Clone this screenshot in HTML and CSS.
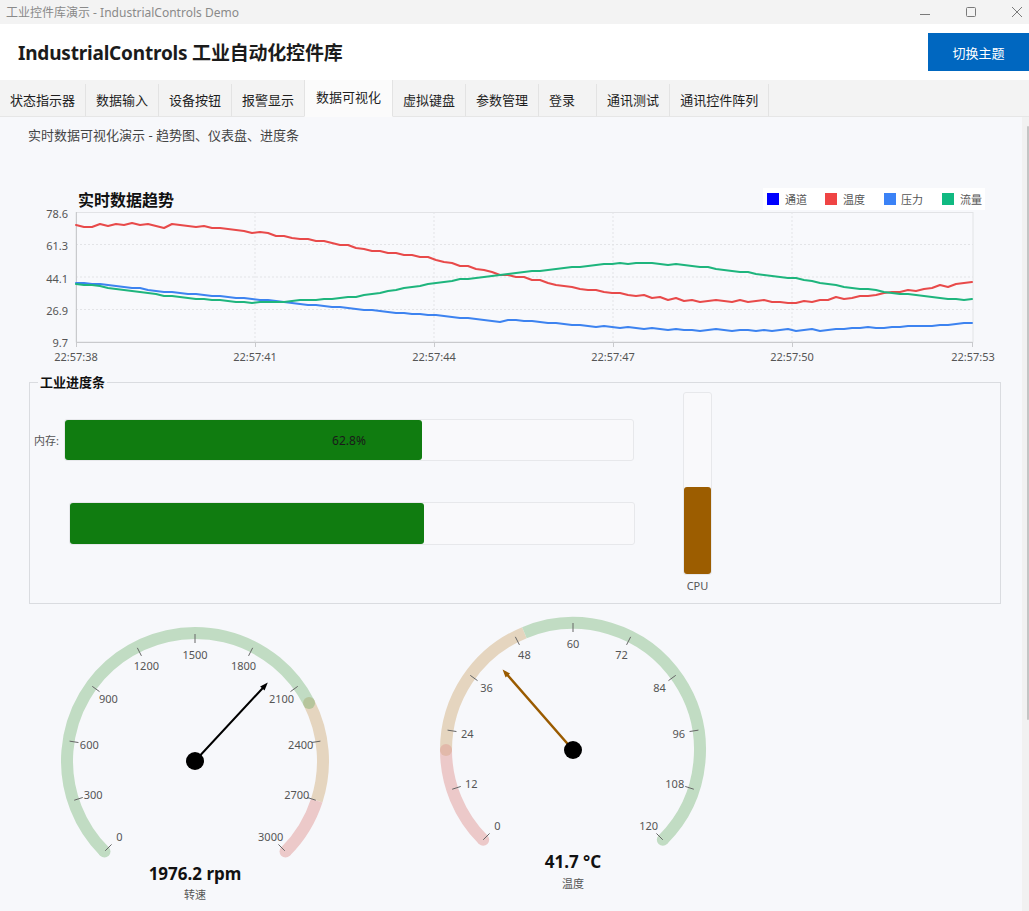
FILE: index.html
```html
<!DOCTYPE html>
<html lang="zh-CN">
<head>
<meta charset="utf-8">
<title>工业控件库演示 - IndustrialControls Demo</title>
<link rel="stylesheet" href="styles.css">
</head>
<body>
<div class="titlebar">
  <span class="caption">工业控件库演示 - IndustrialControls Demo</span>
  <div class="winctl">
    <svg viewBox="0 0 12 12"><line x1="1" y1="8.5" x2="11" y2="8.5"/></svg>
    <svg viewBox="0 0 12 12"><rect x="1.5" y="1.5" width="9" height="9" rx="1"/></svg>
    <svg viewBox="0 0 12 12"><line x1="1" y1="1" x2="11" y2="11"/><line x1="11" y1="1" x2="1" y2="11"/></svg>
  </div>
</div>
<div class="header">
  <h1>IndustrialControls 工业自动化控件库</h1>
  <div class="theme-btn">切换主题</div>
</div>
<div class="tabs">
  <div class="tab">状态指示器</div>
  <div class="tab">数据输入</div>
  <div class="tab">设备按钮</div>
  <div class="tab">报警显示</div>
  <div class="tab active">数据可视化</div>
  <div class="tab">虚拟键盘</div>
  <div class="tab">参数管理</div>
  <div class="tab">登录</div>
  <div class="tab">通讯测试</div>
  <div class="tab">通讯控件阵列</div>
</div>
<div class="main">
  <div class="content">
    <p class="subtitle">实时数据可视化演示 - 趋势图、仪表盘、进度条</p>

    <svg class="chart" width="1000" height="190" viewBox="20 180 1000 190">
      <text class="chart-title" x="78" y="200">实时数据趋势</text>
      <rect class="legend-bg" x="763" y="188" width="222" height="22"/>
      <rect x="767" y="193" width="12" height="12" fill="#0000ff"/>
      <text class="legend-text" x="785" y="199">通道</text>
      <rect x="825" y="193" width="12" height="12" fill="#ef4444"/>
      <text class="legend-text" x="843" y="199">温度</text>
      <rect x="884" y="193" width="12" height="12" fill="#3b82f6"/>
      <text class="legend-text" x="901" y="199">压力</text>
      <rect x="942" y="193" width="12" height="12" fill="#10b981"/>
      <text class="legend-text" x="960" y="199">流量</text>

      <rect class="plot-bg" x="76" y="212.5" width="897" height="129.5"/>
      <g class="grid">
        <line x1="76" y1="244.5" x2="973" y2="244.5"/>
        <line x1="76" y1="277" x2="973" y2="277"/>
        <line x1="76" y1="309.5" x2="973" y2="309.5"/>
        <line x1="255" y1="212" x2="255" y2="342"/>
        <line x1="434" y1="212" x2="434" y2="342"/>
        <line x1="613" y1="212" x2="613" y2="342"/>
        <line x1="792" y1="212" x2="792" y2="342"/>
      </g>
      <g class="axis">
        <line x1="76.5" y1="212" x2="76.5" y2="342"/>
        <line x1="76" y1="342.5" x2="973" y2="342.5"/>
        <line x1="76.5" y1="342" x2="76.5" y2="347"/>
        <line x1="255.5" y1="342" x2="255.5" y2="347"/>
        <line x1="434.5" y1="342" x2="434.5" y2="347"/>
        <line x1="613.5" y1="342" x2="613.5" y2="347"/>
        <line x1="792.5" y1="342" x2="792.5" y2="347"/>
        <line x1="972.5" y1="342" x2="972.5" y2="347"/>
      </g>
      <g class="ylab">
        <text x="68" y="213">78.6</text>
        <text x="68" y="245">61.3</text>
        <text x="68" y="278">44.1</text>
        <text x="68" y="310">26.9</text>
        <text x="68" y="342">9.7</text>
      </g>
      <g class="xlab">
        <text x="76" y="356">22:57:38</text>
        <text x="255" y="356">22:57:41</text>
        <text x="434" y="356">22:57:44</text>
        <text x="613" y="356">22:57:47</text>
        <text x="792" y="356">22:57:50</text>
        <text x="973" y="356">22:57:53</text>
      </g>
      <polyline class="series s-red" points="76,225 84,227 92,227 100,224 108,226 116,224 124,225 132,223 140,225 148,224 156,226 164,228 172,224 180,225 188,226 196,227 204,226 212,228 220,228 228,229 236,230 244,231 252,233 260,232 268,233 276,236 284,236 292,238 300,239 308,239 316,241 324,241 332,243 340,245 348,245 356,248 364,249 372,251 380,251 388,253 396,253 404,255 412,255 420,257 428,257 436,260 444,262 452,263 460,266 468,266 476,269 484,270 492,272 500,275 508,275 516,277 524,277 532,280 540,280 548,283 556,285 564,286 572,287 580,289 588,290 596,290 604,292 612,293 620,293 628,295 636,296 644,295 652,298 660,297 668,300 676,298 684,301 692,300 700,302 708,301 716,300 724,301 732,302 740,300 748,302 756,301 764,300 772,302 780,302 788,303 796,303 804,301 812,302 820,300 828,300 836,297 844,299 852,298 860,296 868,296 876,295 884,293 892,292 900,292 908,290 916,291 924,289 932,288 940,285 948,287 956,284 964,283 972,282"/>
      <polyline class="series s-blue" points="76,283 84,283 92,284 100,284 108,285 116,286 124,287 132,288 140,288 148,290 156,291 164,292 172,292 180,293 188,294 196,294 204,295 212,296 220,296 228,297 236,298 244,298 252,299 260,300 268,300 276,301 284,302 292,303 300,304 308,305 316,305 324,306 332,307 340,307 348,308 356,309 364,310 372,310 380,311 388,312 396,313 404,313 412,314 420,314 428,315 436,315 444,316 452,317 460,318 468,318 476,319 484,320 492,321 500,322 508,320 516,320 524,321 532,321 540,322 548,323 556,323 564,324 572,325 580,325 588,326 596,327 604,326 612,327 620,328 628,327 636,328 644,329 652,328 660,329 668,330 676,329 684,330 692,330 700,331 708,330 716,329 724,330 732,331 740,330 748,330 756,331 764,330 772,331 780,330 788,329 796,331 804,330 812,329 820,331 828,330 836,329 844,329 852,328 860,328 868,327 876,328 884,328 892,327 900,327 908,326 916,326 924,326 932,326 940,325 948,325 956,324 964,323 972,323"/>
      <polyline class="series s-green" points="76,284 84,285 92,285 100,286 108,288 116,289 124,290 132,291 140,292 148,293 156,294 164,296 172,296 180,297 188,298 196,299 204,299 212,300 220,300 228,301 236,302 244,302 252,303 260,302 268,302 276,302 284,302 292,301 300,300 308,300 316,300 324,299 332,299 340,298 348,297 356,297 364,295 372,294 380,293 388,291 396,290 404,288 412,287 420,286 428,284 436,283 444,282 452,281 460,279 468,279 476,278 484,277 492,276 500,275 508,274 516,273 524,272 532,271 540,271 548,270 556,269 564,268 572,267 580,267 588,266 596,265 604,264 612,264 620,263 628,264 636,263 644,263 652,263 660,264 668,265 676,264 684,265 692,266 700,267 708,267 716,269 724,270 732,271 740,272 748,272 756,274 764,275 772,276 780,277 788,278 796,278 804,280 812,281 820,283 828,284 836,285 844,287 852,288 860,289 868,289 876,290 884,292 892,293 900,294 908,294 916,295 924,296 932,297 940,298 948,299 956,299 964,300 972,299"/>
    </svg>

    <div class="group">
      <span class="group-title">工业进度条</span>
      <div class="group-body">
        <div class="hbars">
          <div class="hrow">
            <span class="hlabel">内存:</span>
            <div class="track track-1">
              <div class="fill" style="width:62.8%"></div>
              <span class="pct">62.8%</span>
            </div>
          </div>
          <div class="track track-2">
            <div class="fill" style="width:62.8%"></div>
          </div>
        </div>
        <div class="vbar">
          <div class="vtrack">
            <div class="vfill" style="height:48%"></div>
          </div>
          <span class="vlabel">CPU</span>
        </div>
      </div>
    </div>

    <div class="gauges">
      <svg class="gauge gauge-left" width="300" height="296" viewBox="0 0 300 296">
        <path class="arc arc-green" d="M59.49 236.51 A128 128 0 1 1 264.05 87.89"/>
        <path class="arc arc-amber" d="M264.05 87.89 A128 128 0 0 1 271.74 185.55"/>
        <path class="arc arc-red" d="M271.74 185.55 A128 128 0 0 1 240.51 236.51"/>
        <circle cx="59.49" cy="236.51" r="6" fill="#c1dcc3"/>
        <circle cx="240.51" cy="236.51" r="6" fill="#ecc9c9"/>
        <circle cx="264.05" cy="87.89" r="6" fill="#b6c59c"/>
        <g class="ticks">
          <line x1="66.56" y1="229.44" x2="60.20" y2="235.80"/>
          <line x1="37.77" y1="182.46" x2="29.21" y2="185.24"/>
          <line x1="33.45" y1="127.54" x2="24.56" y2="126.14"/>
          <line x1="54.54" y1="76.64" x2="47.26" y2="71.35"/>
          <line x1="96.43" y1="40.86" x2="92.34" y2="32.84"/>
          <line x1="150" y1="28" x2="150" y2="19"/>
          <line x1="203.57" y1="40.86" x2="207.66" y2="32.84"/>
          <line x1="245.46" y1="76.64" x2="252.74" y2="71.35"/>
          <line x1="266.55" y1="127.54" x2="275.44" y2="126.14"/>
          <line x1="262.23" y1="182.46" x2="270.79" y2="185.24"/>
          <line x1="233.44" y1="229.44" x2="239.80" y2="235.80"/>
        </g>
        <g class="tick-labels">
          <text x="74.34" y="221.66">0</text>
          <text x="48.23" y="179.06">300</text>
          <text x="44.32" y="129.27">600</text>
          <text x="63.44" y="83.11">900</text>
          <text x="101.42" y="50.66">1200</text>
          <text x="150" y="39">1500</text>
          <text x="198.58" y="50.66">1800</text>
          <text x="236.56" y="83.11">2100</text>
          <text x="255.68" y="129.27">2400</text>
          <text x="251.77" y="179.06">2700</text>
          <text x="225.66" y="221.66">3000</text>
        </g>
        <line class="needle needle-black" x1="150" y1="146" x2="219" y2="71.7"/>
        <polygon fill="#000" points="222.79,67.58 219.55,75.48 215.15,71.40"/>
        <circle cx="150" cy="146" r="9" fill="#000"/>
        <text class="g-value" x="150" y="258">1976.2 rpm</text>
        <text class="g-name" x="150" y="279">转速</text>
      </svg>

      <svg class="gauge gauge-right" width="300" height="300" viewBox="0 0 300 300">
        <path class="arc arc-red" d="M60.20 235.80 A127 127 0 0 1 23 146"/>
        <path class="arc arc-amber" d="M23 146 A127 127 0 0 1 101.40 28.67"/>
        <path class="arc arc-green" d="M101.40 28.67 A127 127 0 0 1 239.80 235.80"/>
        <circle cx="60.20" cy="235.80" r="6" fill="#ecc9c9"/>
        <circle cx="239.80" cy="235.80" r="6" fill="#c1dcc3"/>
        <circle cx="23" cy="146" r="6" fill="#e2b9aa"/>
        <g class="ticks">
          <line x1="66.56" y1="229.44" x2="60.20" y2="235.80"/>
          <line x1="37.77" y1="182.46" x2="29.21" y2="185.24"/>
          <line x1="33.45" y1="127.54" x2="24.56" y2="126.14"/>
          <line x1="54.54" y1="76.64" x2="47.26" y2="71.35"/>
          <line x1="96.43" y1="40.86" x2="92.34" y2="32.84"/>
          <line x1="150" y1="28" x2="150" y2="19"/>
          <line x1="203.57" y1="40.86" x2="207.66" y2="32.84"/>
          <line x1="245.46" y1="76.64" x2="252.74" y2="71.35"/>
          <line x1="266.55" y1="127.54" x2="275.44" y2="126.14"/>
          <line x1="262.23" y1="182.46" x2="270.79" y2="185.24"/>
          <line x1="233.44" y1="229.44" x2="239.80" y2="235.80"/>
        </g>
        <g class="tick-labels">
          <text x="74.34" y="221.66">0</text>
          <text x="48.23" y="179.06">12</text>
          <text x="44.32" y="129.27">24</text>
          <text x="63.44" y="83.11">36</text>
          <text x="101.42" y="50.66">48</text>
          <text x="150" y="39">60</text>
          <text x="198.58" y="50.66">72</text>
          <text x="236.56" y="83.11">84</text>
          <text x="255.68" y="129.27">96</text>
          <text x="251.77" y="179.06">108</text>
          <text x="225.66" y="221.66">120</text>
        </g>
        <line class="needle needle-brown" x1="150" y1="146" x2="82.5" y2="68.8"/>
        <polygon fill="#9a5b00" points="79.56,65.46 87.09,69.51 82.57,73.45"/>
        <circle cx="150" cy="146" r="9" fill="#000"/>
        <text class="g-value" x="150" y="257">41.7 °C</text>
        <text class="g-name" x="150" y="279">温度</text>
      </svg>
    </div>
  </div>
  <div class="scrollbar"><div class="thumb"></div></div>
</div>
</body>
</html>
```

FILE: styles.css
```css
* { box-sizing: border-box; }
html, body { margin: 0; padding: 0; }
body {
  width: 1029px;
  height: 911px;
  overflow: hidden;
  background: #f7f8fb;
  color: #222;
  font-family: "Segoe UI", "Noto Sans", "Noto Sans CJK SC", sans-serif;
}

/* title bar */
.titlebar {
  height: 24px;
  background: #f3f3f3;
  display: flex;
  align-items: center;
  padding-left: 6px;
}
.caption { font-size: 12px; color: #8a8a8a; }
.winctl {
  margin-left: auto;
  display: flex;
  gap: 34px;
  padding-right: 6px;
}
.winctl svg { width: 12px; height: 12px; display: block; }
.winctl line, .winctl rect { stroke: #7a7a7a; stroke-width: 1; fill: none; }

/* header */
.header {
  height: 56px;
  background: #ffffff;
  display: flex;
  align-items: center;
  padding-left: 18px;
}
.header h1 {
  margin: 0;
  font-size: 19px;
  font-weight: 700;
  color: #1b1b1b;
  letter-spacing: -0.2px;
}
.theme-btn {
  margin-left: auto;
  width: 101px;
  height: 38px;
  background: #0067c0;
  color: #fff;
  font-size: 13px;
  display: flex;
  align-items: center;
  justify-content: center;
}

/* tabs */
.tabs {
  height: 37px;
  display: flex;
  align-items: flex-end;
  background: #f3f3f3;
  border-bottom: 1px solid #e6e6e6;
}
.tab {
  height: 33px;
  line-height: 33px;
  min-width: 58px;
  padding: 0 10px 0 10px;
  font-size: 13px;
  color: #1e1e1e;
  background: #f3f3f3;
  border-right: 1px solid #e3e3e3;
  margin-bottom: -1px;
  border-bottom: 1px solid #e6e6e6;
}
.tab.active {
  height: 37px;
  line-height: 34px;
  padding: 0 11px;
  background: #fbfbfb;
  border-bottom: 1px solid #fbfbfb;
  border-left: 1px solid #e3e3e3;
  margin-left: -1px;
}

/* main */
.main { display: flex; height: 794px; }
.content { flex: 1; min-width: 0; }
.scrollbar {
  width: 7px;
  background: #f1f1f1;
  padding-top: 9px;
  display: flex;
  justify-content: flex-end;
}
.thumb { width: 2px; height: 594px; background: #c4c4c4; border-radius: 1px; }

.subtitle {
  margin: 0;
  padding: 8px 0 0 28px;
  height: 28px;
  line-height: 20px;
  font-size: 13px;
  color: #444;
}

/* chart */
.chart { display: block; margin: 35px 0 0 20px; }
.chart-title { font-size: 16px; font-weight: 700; fill: #111; dominant-baseline: central; }
.legend-bg { fill: #ffffff; }
.legend-text { font-size: 11px; fill: #555; dominant-baseline: central; }
.plot-bg { fill: #f8f9fc; stroke: #e2e3e6; stroke-width: 1; }
.grid line { stroke: #e3e4e7; stroke-width: 1; stroke-dasharray: 2 2; }
.axis line { stroke: #c9cacd; stroke-width: 1; }
.ylab text { font-size: 11px; fill: #555; text-anchor: end; dominant-baseline: central; }
.xlab text { font-size: 11px; fill: #555; text-anchor: middle; dominant-baseline: central; }
.series { fill: none; stroke-width: 2; stroke-linejoin: round; stroke-linecap: round; }
.s-red { stroke: #e84a4a; }
.s-blue { stroke: #3d83f0; }
.s-green { stroke: #1eb57d; }

/* progress group */
.group {
  position: relative;
  margin: 12px 0 0 29px;
  width: 972px;
  height: 222px;
  border: 1px solid #dadce0;
}
.group-title {
  position: absolute;
  top: -10px;
  left: 8px;
  padding: 0 2px;
  font-size: 13px;
  font-weight: 700;
  line-height: 18px;
  color: #111;
  background: #f7f8fb;
}
.group-body { display: flex; align-items: flex-start; padding-left: 4px; }
.hbars { width: 601px; padding-top: 36px; }
.hrow { display: flex; align-items: center; }
.hlabel { width: 30px; font-size: 11px; color: #555; }
.track {
  position: relative;
  background: #f9f9fb;
  border: 1px solid #e7e8eb;
  border-radius: 3px;
  display: flex;
  align-items: stretch;
}
.track-1 { width: 570px; height: 42px; }
.track-2 { width: 566px; height: 43px; margin: 41px 0 0 35px; }
.fill { background: #107c10; border-radius: 3px; }
.pct {
  position: absolute;
  inset: 0;
  display: flex;
  align-items: center;
  justify-content: center;
  font-size: 12px;
  color: #1a1a1a;
}
.vbar {
  margin: 9px 0 0 48px;
  display: flex;
  flex-direction: column;
  align-items: center;
}
.vtrack {
  width: 29px;
  height: 183px;
  background: #f9f9fb;
  border: 1px solid #e7e8eb;
  border-radius: 3px;
  display: flex;
  flex-direction: column;
  justify-content: flex-end;
}
.vfill { background: #9c5d00; border-radius: 3px; }
.vlabel { margin-top: 4px; font-size: 11px; line-height: 14px; color: #555; }

/* gauges */
.gauges { display: flex; align-items: flex-start; gap: 78px; margin-left: 45px; }
.gauge { display: block; }
.gauge-left { margin-top: 11px; }
.arc { fill: none; stroke-width: 12; }
.arc-green { stroke: #c1dcc3; }
.arc-amber { stroke: #e5d5bf; }
.arc-red { stroke: #ecc9c9; }
.ticks line { stroke: #666; stroke-width: 1; }
.tick-labels text { font-size: 11px; fill: #555; text-anchor: middle; dominant-baseline: central; }
.needle { stroke-linecap: round; }
.needle-black { stroke: #000; stroke-width: 2; }
.needle-brown { stroke: #9a5b00; stroke-width: 2.5; }
.g-value { font-size: 17px; font-weight: 700; fill: #111; text-anchor: middle; dominant-baseline: central; }
.g-name { font-size: 11px; fill: #555; text-anchor: middle; dominant-baseline: central; }
```
